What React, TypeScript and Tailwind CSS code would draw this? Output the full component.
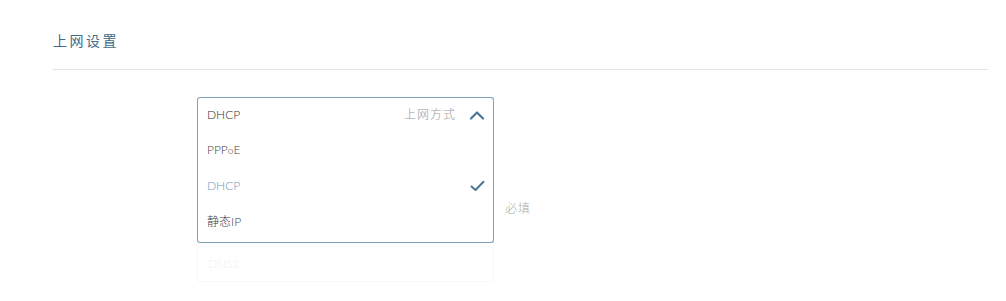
import React from "react";

const font = { fontFamily: '"Lato", "Noto Sans CJK SC", sans-serif' };

function ChevronUp() {
  return (
    <svg width="16" height="10" viewBox="0 0 16 10" fill="none">
      <path d="M2 8.5 L8 2.5 L14 8.5" stroke="#4b7595" strokeWidth="2.2" strokeLinecap="round" strokeLinejoin="round" />
    </svg>
  );
}

function Check() {
  return (
    <svg width="15" height="12" viewBox="0 0 15 12" fill="none">
      <path d="M1.5 6.5 L5.5 10 L13.5 1.8" stroke="#4b7595" strokeWidth="2" strokeLinecap="round" strokeLinejoin="round" />
    </svg>
  );
}

const options = [
  { label: "PPPoE", selected: false },
  { label: "DHCP", selected: true },
  { label: "静态IP", selected: false },
];

export default function App() {
  return (
    <div className="w-[1006px] h-[301px] overflow-hidden bg-white pl-[53px] pr-[18px] text-[12px] font-light" style={font}>
      <div className="h-[70px] border-b border-[#e2e2e2] flex items-center">
        <h2 className="text-[14px] tracking-[2.5px] text-[#40698a] pt-[12px] font-normal">上网设置</h2>
      </div>

      <div className="pl-[144px] pt-[27px]">
        <div className="relative">
          <div className="w-[297px] h-[36px] flex items-center justify-between pl-[9px] pr-[8px] border border-[#7fa3bb] rounded-t-[3px] border-b-[#dfe6ea] bg-white">
            <span className="text-[#333]">DHCP</span>
            <div className="flex items-center gap-[13px]">
              <span className="text-[#999] tracking-[1px]">上网方式</span>
              <ChevronUp />
            </div>
          </div>
          <div className="absolute left-0 top-[35px] w-[297px] border border-t-0 border-[#7fa3bb] rounded-b-[3px] bg-white z-10 pb-[2px]">
            {options.map((o) => (
              <div key={o.label} className="h-[36px] flex items-center justify-between pl-[9px] pr-[8px]">
                <span className={o.selected ? "text-[#6d9cba]" : "text-[#444]"}>
                  {o.label === "PPPoE" ? (
                    <>
                      PPP<span className="text-[10px]">o</span>E
                    </>
                  ) : (
                    o.label
                  )}
                </span>
                {o.selected && <Check />}
              </div>
            ))}
          </div>

          <div className="mt-[58px] flex items-center h-[36px]">
            <div className="shrink-0 w-[297px] h-full border border-[#e4e4e4] rounded-[3px]" />
            <span className="ml-[11px] text-[#aaa] tracking-[1px]">必填</span>
          </div>

          <div className="mt-[19px] h-[36px] w-[297px] border border-[#f8f8f8] rounded-[3px] flex items-center pl-[10px]">
            <span className="text-[#f0f0f0]">DNS2</span>
          </div>
        </div>
      </div>
    </div>
  );
}
